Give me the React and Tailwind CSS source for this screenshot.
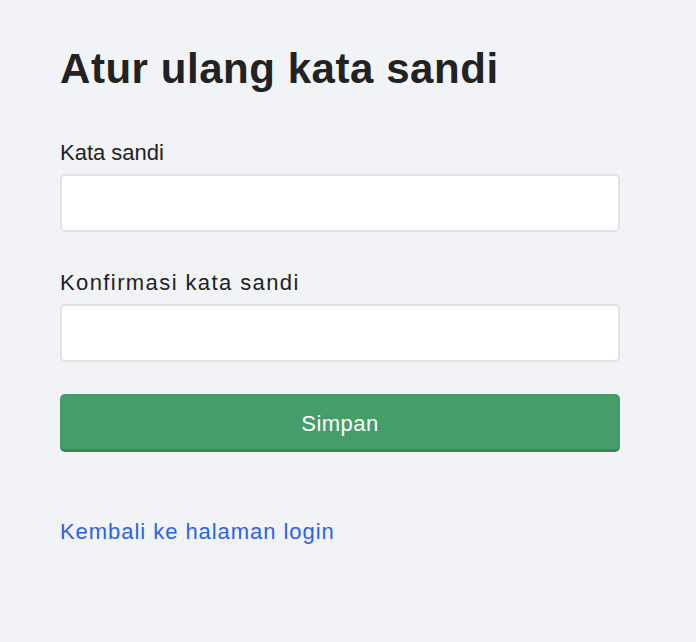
import { useState } from "react";

export default function App() {
  const [password, setPassword] = useState("");
  const [confirm, setConfirm] = useState("");

  return (
    <div
      className="min-h-screen bg-[#f2f3f7] text-[#222222]"
      style={{ fontFamily: '"Liberation Sans", Arial, sans-serif' }}
    >
      <div className="w-[560px] ml-[60px] pt-[45px]">
        <h1 className="text-[42px] leading-[48px] font-bold tracking-[0.55px]">
          Atur ulang kata sandi
        </h1>

        <form className="mt-[46px] flex flex-col" onSubmit={(e) => e.preventDefault()}>
          <label className="text-[22px] leading-[28px]">Kata sandi</label>
          <input
            type="password"
            value={password}
            onChange={(e) => setPassword(e.target.value)}
            className="mt-[7px] h-[58px] w-full rounded-[5px] border-2 border-[#e2e3e7] bg-white px-3 outline-none"
          />

          <label className="mt-[37px] text-[22px] leading-[28px] tracking-[1.4px]">
            Konfirmasi kata sandi
          </label>
          <input
            type="password"
            value={confirm}
            onChange={(e) => setConfirm(e.target.value)}
            className="mt-[7px] h-[58px] w-full rounded-[5px] border-2 border-[#e2e3e7] bg-white px-3 outline-none"
          />

          <button
            type="submit"
            className="mt-[32px] h-[58px] w-full rounded-[5px] border-b-[3px] border-[#3a8457] bg-[#459e69] pt-[4px] text-[22px] tracking-[0.5px] text-white"
          >
            Simpan
          </button>
        </form>

        <a
          href="#"
          className="mt-[66px] block text-[22px] leading-[28px] tracking-[0.95px] text-[#2b62ea]"
        >
          Kembali ke halaman login
        </a>
      </div>
    </div>
  );
}
